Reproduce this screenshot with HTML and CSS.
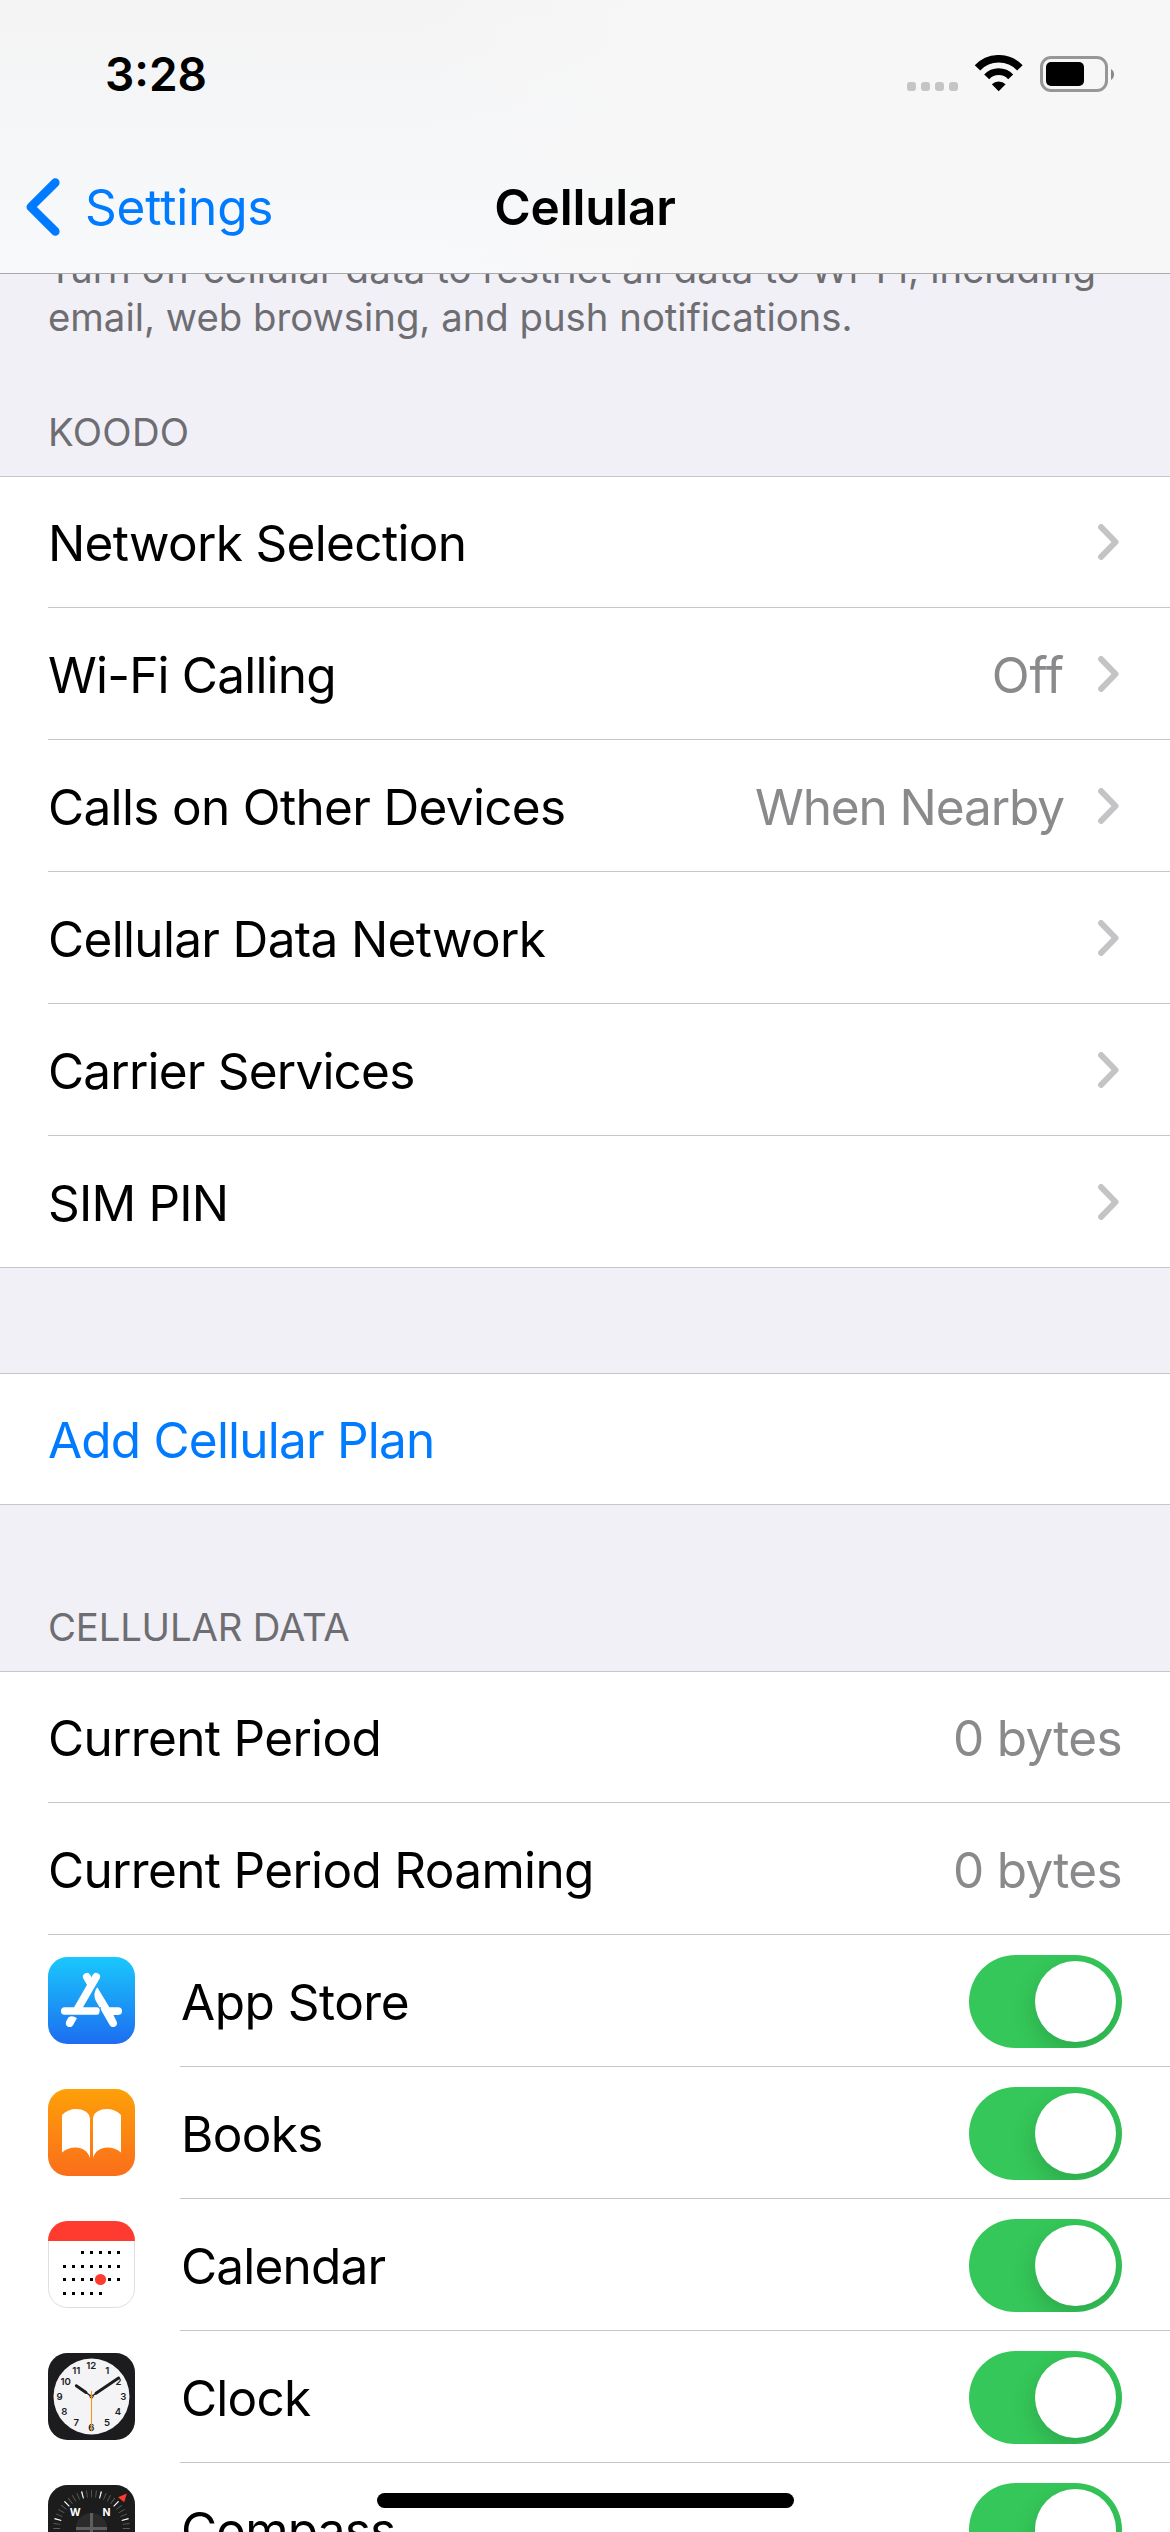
FILE: index.html
```
<!DOCTYPE html>
<html lang="en">
<head>
<meta charset="utf-8">
<title>Cellular</title>
<link rel="stylesheet" href="styles.css">
</head>
<body>
<svg class="defs" width="0" height="0" aria-hidden="true">
  <symbol id="chevron" viewBox="0 0 21 36"><path d="M3.1 3.1 17.6 18 3.1 32.9" fill="none" stroke="#c4c4c6" stroke-width="6" stroke-linecap="round" stroke-linejoin="round"/></symbol>
</svg>
<div class="screen">
  <header class="top">
    <div class="status">
      <span class="time">3:28</span>
      <div class="status-icons">
        <svg width="51" height="38" viewBox="0 0 51 38" fill="#c5c5c5"><rect x="0" y="27" width="9" height="9" rx="3"/><rect x="14" y="27" width="9" height="9" rx="3"/><rect x="28" y="27" width="9" height="9" rx="3"/><rect x="42" y="27" width="9" height="9" rx="3"/></svg>
        <svg width="50" height="38" viewBox="0 0 50 38"><g fill="none" stroke="#000"><path stroke-width="7.6" d="M3.5 12.9A29.2 29.2 0 0 1 45.9 12.9"/><path stroke-width="6.9" d="M12.7 21.8A16.4 16.4 0 0 1 36.7 21.8"/></g><path d="M24.7 36.3 17.8 29.3A10 10 0 0 1 31.6 29.3Z"/></svg>
        <svg width="75" height="38" viewBox="0 0 75 38"><rect x="1.5" y="2.5" width="65" height="33" rx="9.5" fill="none" stroke="#979797" stroke-width="3"/><rect x="6" y="7" width="38" height="24" rx="5"/><path d="M71 14a6.5 6.5 0 0 1 0 11Z" fill="#8a8a8a"/></svg>
      </div>
    </div>
    <nav class="navbar">
      <a class="back"><svg width="34" height="58" viewBox="0 0 34 58"><path d="M29.3 4.6 4.8 29 29.3 53.4" fill="none" stroke="#007aff" stroke-width="8.6" stroke-linecap="round" stroke-linejoin="round"/></svg><span>Settings</span></a>
      <h1 class="title">Cellular</h1>
    </nav>
  </header>

  <main>
    <p class="footnote"><span class="lead">Turn off cellular data to restrict all data to Wi-Fi, including</span><br>email, web browsing, and push notifications.</p>

    <h2 class="heading heading-carrier">KOODO</h2>
    <section class="group">
      <div class="row"><div class="body"><span class="label">Network Selection</span><svg class="chevron"><use href="#chevron"/></svg></div></div>
      <div class="row"><div class="body"><span class="label tight">Wi-Fi Calling</span><span class="value loose">Off</span><svg class="chevron"><use href="#chevron"/></svg></div></div>
      <div class="row"><div class="body"><span class="label">Calls on Other Devices</span><span class="value tighter">When Nearby</span><svg class="chevron"><use href="#chevron"/></svg></div></div>
      <div class="row"><div class="body"><span class="label">Cellular Data Network</span><svg class="chevron"><use href="#chevron"/></svg></div></div>
      <div class="row"><div class="body"><span class="label tight">Carrier Services</span><svg class="chevron"><use href="#chevron"/></svg></div></div>
      <div class="row"><div class="body"><span class="label tight">SIM PIN</span><svg class="chevron"><use href="#chevron"/></svg></div></div>
    </section>

    <section class="group group-plan">
      <div class="row"><div class="body"><a class="label tight link">Add Cellular Plan</a></div></div>
    </section>

    <h2 class="heading heading-data">CELLULAR DATA</h2>
    <section class="group">
      <div class="row"><div class="body ends"><span class="label">Current Period</span><span class="value">0 bytes</span></div></div>
      <div class="row"><div class="body ends"><span class="label">Current Period Roaming</span><span class="value">0 bytes</span></div></div>
      <div class="row app">
        <svg class="icon" viewBox="0 0 87 87">
          <defs><linearGradient id="store" x1="0" y1="0" x2="0" y2="1"><stop offset="0" stop-color="#1ac8fc"/><stop offset="1" stop-color="#1d6df1"/></linearGradient></defs>
          <rect width="87" height="87" rx="19.5" fill="url(#store)"/>
          <g stroke="#fff" stroke-width="7.7" fill="none" stroke-linecap="round"><path d="M38.8 19.8 43 27"/><path d="M48.2 19.8 29.5 52"/><path d="M16.8 54H48.3"/></g>
          <g fill="#fff"><path d="M49.3 30.3 61.4 50.2H70.2a3.85 3.85 0 0 1 0 7.7H65.4L68.5 64.2C71 69 64.5 72.3 61.8 68.2L48.2 44.5C45.6 39.8 45.9 34.6 49.3 30.3Z"/><path d="M20.3 60.4C23 58.6 26 58.9 28.9 61.3L25 68.2C22.5 72.2 16.2 69 18.2 64.4Z"/></g>
          <path d="M52.2 50V53.2L51.5 58" fill="none" stroke="#1c8df7" stroke-width="1"/>
        </svg>
        <div class="body ends"><span class="label wide">App Store</span><span class="toggle"><i class="knob"></i></span></div>
      </div>
      <div class="row app">
        <svg class="icon" viewBox="0 0 87 87">
          <defs><linearGradient id="books" x1="0" y1="0" x2="0" y2="1"><stop offset="0" stop-color="#fea008"/><stop offset="1" stop-color="#fa6e1b"/></linearGradient></defs>
          <rect width="87" height="87" rx="19.5" fill="url(#books)"/>
          <path fill="#fff" d="M14 26C18 21.8 23 20 28 20C35 20 42 23.3 42 30V69C40 62 34 58.5 28 58.5C22 58.5 18 60.4 14 63.4ZM73 26C69 21.8 64 20 59 20C52 20 45 23.3 45 30V69C47 62 53 58.5 59 58.5C65 58.5 69 60.4 73 63.4Z"/>
        </svg>
        <div class="body ends"><span class="label">Books</span><span class="toggle"><i class="knob"></i></span></div>
      </div>
      <div class="row app">
        <svg class="icon" viewBox="0 0 87 87">
          <rect x=".5" y=".5" width="86" height="86" rx="19" fill="#fff" stroke="#dedede"/>
          <path d="M0 20A19.5 20 0 0 1 19.5 0H67.5A19.5 20 0 0 1 87 20Z" fill="#ff3b30"/>
          <g fill="none" stroke="#000" stroke-width="3" stroke-dasharray="3 6"><path d="M33 31.5H72"/><path d="M15 45.5H72"/><path d="M15 58.5H72"/><path d="M15 72.5H54"/></g>
          <circle cx="52.5" cy="58.5" r="5.6" fill="#ff3b30"/>
        </svg>
        <div class="body ends"><span class="label tight">Calendar</span><span class="toggle"><i class="knob"></i></span></div>
      </div>
      <div class="row app">
        <svg class="icon" viewBox="0 0 87 87">
          <rect width="87" height="87" rx="19.5" fill="#1c1c1e"/>
          <circle cx="43.5" cy="43.5" r="38" fill="#f4f4f7"/>
          <g class="numerals">
            <text x="43.3" y="16">12</text><text x="59.3" y="21">1</text><text x="70.5" y="32">2</text><text x="75.2" y="47">3</text><text x="70" y="62">4</text><text x="59" y="73">5</text><text x="43.4" y="78">6</text><text x="28.3" y="73">7</text><text x="16.4" y="62">8</text><text x="11.6" y="47">9</text><text x="17.6" y="32">10</text><text x="28.2" y="21">11</text>
          </g>
          <g stroke="#1c1c1e" stroke-linecap="round"><path d="M43.5 43.5 28.3 32.5M43.5 43.5 71 24.6" stroke-width="1.4"/><path d="M38 39.5 28.3 32.7M48 40.2 70.6 25" stroke-width="2.9"/></g>
          <circle cx="43.5" cy="43.5" r="2" fill="#1c1c1e"/><circle cx="43.5" cy="43.5" r="1.3" fill="#f19a14"/>
          <path d="M43.5 38V78.5" stroke="#f19a14" stroke-width="1.1"/>
        </svg>
        <div class="body ends"><span class="label tight">Clock</span><span class="toggle"><i class="knob"></i></span></div>
      </div>
      <div class="row app">
        <svg class="icon" viewBox="0 0 87 87">
          <rect width="87" height="87" rx="19.5" fill="#1c1c1c"/>
          <circle cx="43.5" cy="43.5" r="34.8" fill="none" stroke="#5c5c5c" stroke-width="7" pathLength="480" stroke-dasharray="2 8" stroke-dashoffset="1"/>
          <circle cx="43.5" cy="43.5" r="34.8" fill="none" stroke="#fff" stroke-width="7" pathLength="480" stroke-dasharray="2.4 37.6" stroke-dashoffset="21.2"/>
          <circle cx="43.5" cy="43.5" r="15.6" fill="#2b2b2b"/>
          <path d="M43.5 28V59M28 43.5H59" stroke="#5e5e5e" stroke-width="3"/>
          <path d="M78.8 8.4 70 12.3 76.2 17.2Z" fill="#ff3b30"/>
          <g class="bearings"><text x="27.3" y="31">W</text><text x="58.6" y="31">N</text></g>
        </svg>
        <div class="body ends"><span class="label tight">Compass</span><span class="toggle"><i class="knob"></i></span></div>
      </div>
    </section>
  </main>
  <div class="home-indicator"></div>
</div>
</body>
</html>
```
FILE: styles.css
```
* { box-sizing: border-box; }

body {
  margin: 0;
  background: #f1f0f6;
  color: #000;
  font-family: Inter, "Liberation Sans", sans-serif;
}

.defs { position: absolute; }

.screen {
  position: relative;
  width: 1170px;
  height: 2532px;
  overflow: hidden;
}

/* Translucent header: status bar and navigation bar */
.top {
  position: relative;
  z-index: 1;
  height: 274px;
  border-bottom: 1px solid #a9a9ac;
  background:
    linear-gradient(90deg, rgba(247, 247, 247, 0) 35%, #f7f7f7 62%),
    linear-gradient(#f4f4f4, #f5f6f8 45%, #f8f9fb);
}

.status {
  display: flex;
  justify-content: space-between;
  align-items: center;
  height: 141px;
  padding: 7px 55px 0 105px;
}

.time {
  font-size: 46px;
  font-weight: 600;
  line-height: 46px;
}

.status-icons {
  display: flex;
  gap: 16px;
}

.navbar {
  display: grid;
  grid-template-columns: 1fr auto 1fr;
  align-items: center;
  height: 132px;
  padding: 0 26px;
}

.back {
  display: flex;
  align-items: center;
  gap: 25px;
  color: #007aff;
  font-size: 49.5px;
  letter-spacing: -0.15px;
}

.title {
  margin: 0;
  font-size: 49.5px;
  font-weight: 600;
  letter-spacing: -0.2px;
}

.footnote {
  margin: -29px 0 0;
  padding-left: 48px;
  color: #6d6d72;
  font-size: 38.3px;
  line-height: 48px;
  white-space: nowrap;
}

.lead { letter-spacing: 0.15px; }

.heading {
  margin: 0;
  padding: 0 48px 20px;
  color: #6d6d72;
  font-size: 38.3px;
  font-weight: 400;
  line-height: 48px;
}

.heading-carrier { padding-top: 67px; letter-spacing: 0.3px; }
.heading-data { padding-top: 98px; letter-spacing: -0.17px; }

/* Grouped list */
.group {
  border: solid #c6c6c8;
  border-width: 1px 0;
  background: #fff;
}

.group-plan { margin-top: 105px; }

.row {
  display: flex;
  padding-left: 48px;
}

.body {
  display: flex;
  flex: 1;
  align-items: center;
  height: 132px;
  padding-right: 51px;
  border-bottom: 1px solid #c6c6c8;
}

.row:first-child .body { height: 131px; }
.row:last-child .body { height: 131px; border-bottom: 0; }
.row:only-child .body { height: 130px; }

.ends { padding-right: 48px; }

.label,
.value {
  padding-top: 2px;
  font-size: 49.5px;
  letter-spacing: -0.67px;
  white-space: nowrap;
}

.label { margin-right: auto; }
.value { color: #8a8a8d; }
.link { color: #007aff; }

.wide { letter-spacing: -0.5px; }
.tight { letter-spacing: -0.8px; }
.tighter { letter-spacing: -1.1px; }
.loose { letter-spacing: -0.1px; }

.chevron {
  width: 21px;
  height: 36px;
  margin-left: 34px;
}

.icon {
  width: 87px;
  height: 87px;
  margin: 22px 45px 0 0;
}

.app .label { padding-left: 1px; }

.toggle {
  display: flex;
  justify-content: flex-end;
  width: 153px;
  height: 93px;
  margin-top: 2px;
  padding: 6px;
  border-radius: 47px;
  background: #35c759;
  overflow: hidden;
}

.knob {
  width: 81px;
  height: 81px;
  border-radius: 50%;
  background: #fff;
  box-shadow: 0 9px 24px rgba(0, 0, 0, 0.16);
}

.numerals {
  fill: #1c1c1e;
  font-size: 9.6px;
  font-weight: 600;
  text-anchor: middle;
}

.bearings {
  fill: #fff;
  font-size: 10.5px;
  font-weight: 700;
  text-anchor: middle;
}

.home-indicator {
  position: absolute;
  z-index: 2;
  left: 377px;
  bottom: 24px;
  width: 417px;
  height: 15px;
  border-radius: 8px;
  background: #000;
}
```
